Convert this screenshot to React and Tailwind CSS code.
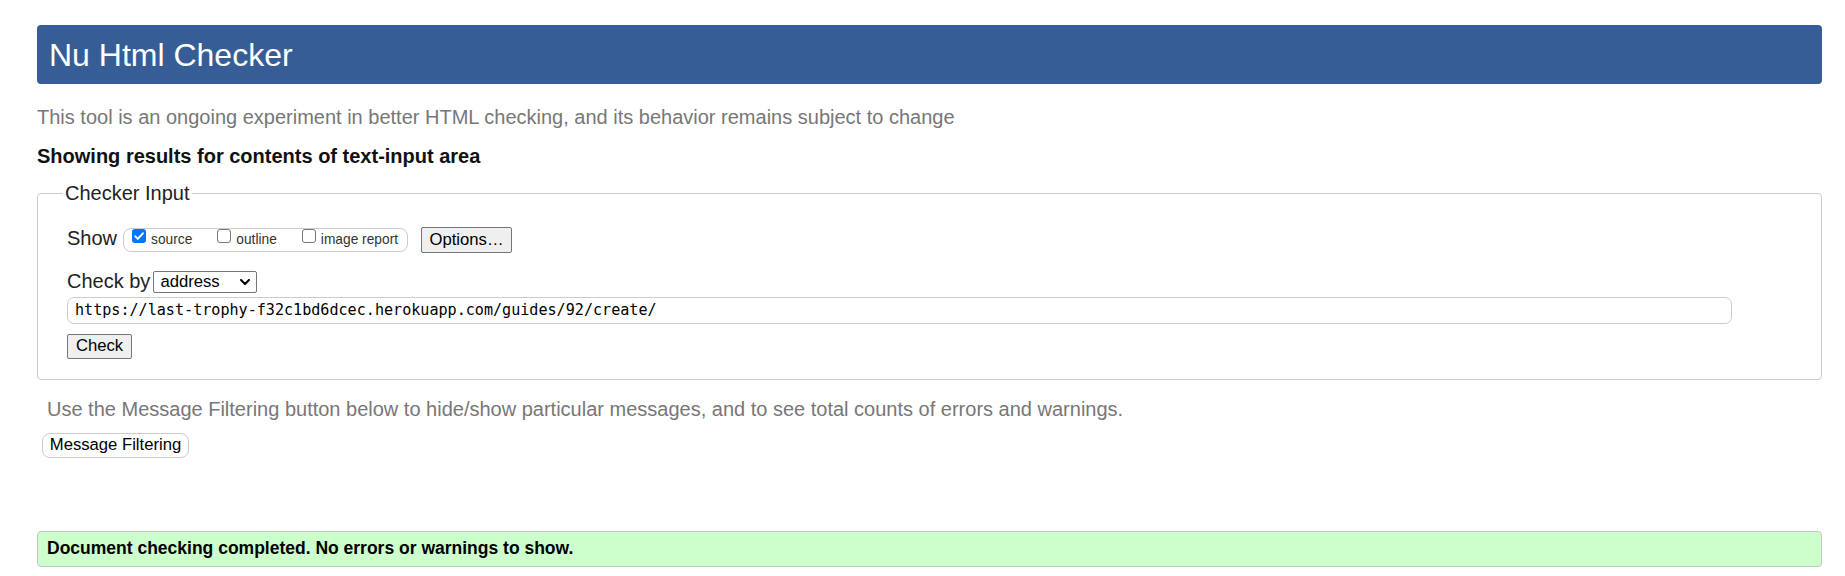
import React from "react";

function Checkbox({ checked }) {
  if (checked) {
    return (
      <span className="inline-flex h-[14px] w-[14px] shrink-0 items-center justify-center rounded-[3px] bg-[#0075ff]">
        <svg viewBox="0 0 14 14" className="h-[14px] w-[14px]">
          <path
            d="M3.2 7.3 5.8 9.9 10.9 4.3"
            fill="none"
            stroke="white"
            strokeWidth="2"
            strokeLinecap="round"
            strokeLinejoin="round"
          />
        </svg>
      </span>
    );
  }
  return (
    <span className="inline-block h-[14px] w-[14px] shrink-0 rounded-[3px] border border-[#767676] bg-white" />
  );
}

export default function App() {
  return (
    <div
      className="h-[576px] w-full overflow-hidden bg-white pl-[37px] pr-[23px] pt-[25px] text-[#222]"
      style={{ fontFamily: '"Liberation Sans", Arial, sans-serif' }}
    >
      <header className="flex h-[59px] items-center rounded-[4px] bg-[#365d96] pl-[12px]">
        <h1 className="text-[32px] leading-none font-normal text-white">Nu Html Checker</h1>
      </header>

      <p className="mt-[22px] text-[20px] leading-[23px] text-[#777]">
        This tool is an ongoing experiment in better HTML checking, and its behavior remains subject to change
      </p>

      <p className="mt-[16px] text-[20px] leading-[23px] font-bold text-[#111]">
        Showing results for contents of text-input area
      </p>

      <fieldset className="mt-[14px] rounded-[4px] border border-[#cccccc] pb-[20px] pl-[25px]">
        <legend className="px-[2px] text-[20px] leading-[23px] text-[#222]">Checker Input</legend>
        <div className="pl-[4px] pt-[22px]">
          <div className="flex h-[26px] items-start">
            <span className="text-[20px] leading-[23px]">Show</span>
            <div className="ml-[6px] mt-[1px] inline-flex h-[24px] items-start rounded-[8px] border border-[#cccccc] pl-[8px] pr-[9px] text-[13.75px] leading-none text-[#333]">
              <Checkbox checked />
              <span className="ml-[5px] mt-[3.5px]">source</span>
              <span className="ml-[25px]">
                <Checkbox />
              </span>
              <span className="ml-[5px] mt-[3.5px]">outline</span>
              <span className="ml-[25px]">
                <Checkbox />
              </span>
              <span className="ml-[5px] mt-[3.5px]">image report</span>
            </div>
            <button
              type="button"
              className="ml-[13px] flex h-[26px] w-[91px] items-center justify-center rounded-[2px] border border-[#767676] bg-[#efefef] text-[16.67px] leading-none text-black"
            >
              Options…
            </button>
          </div>

          <div className="mt-[17px] flex items-start">
            <span className="text-[20px] leading-[23px]">Check by</span>
            <div className="ml-[3px] mt-[1px] flex h-[22px] w-[104px] items-start justify-between rounded-[2px] border border-[#767676] bg-white pl-[6px] pr-[6px] text-[16.67px] leading-[20px] text-black">
              <span>address</span>
              <svg viewBox="0 0 10 6" className="mt-[7px] h-[6px] w-[10px]">
                <path d="M1 1 5 5 9 1" fill="none" stroke="black" strokeWidth="2" strokeLinecap="round" strokeLinejoin="round" />
              </svg>
            </div>
          </div>

          <input
            type="text"
            readOnly
            defaultValue="https://last-trophy-f32c1bd6dcec.herokuapp.com/guides/92/create/"
            className="mt-[3.5px] block h-[27px] w-[1665px] rounded-[7px] border border-[#cccccc] bg-white pl-[7px] text-[15.1px] text-black outline-none"
            style={{ fontFamily: '"DejaVu Sans Mono", "Liberation Mono", monospace' }}
          />

          <button
            type="button"
            className="mt-[10.5px] flex h-[25px] w-[65px] items-center justify-center rounded-[2px] border border-[#767676] bg-[#efefef] text-[16.67px] leading-none text-black"
          >
            Check
          </button>
        </div>
      </fieldset>

      <p className="ml-[10px] mt-[18px] text-[20px] leading-[23px] text-[#777]">
        Use the Message Filtering button below to hide/show particular messages, and to see total counts of errors and warnings.
      </p>

      <button
        type="button"
        className="ml-[5px] mt-[12px] flex h-[25px] w-[147px] items-center justify-center rounded-[8px] border border-[#cccccc] bg-white text-[16.67px] leading-none text-black"
      >
        Message Filtering
      </button>

      <div className="mt-[72.5px] flex h-[36px] items-center rounded-[4px] border border-[#c4c4c4] bg-[#ccffcc] pl-[9px]">
        <span className="text-[17.5px] leading-none font-bold text-black">
          Document checking completed. No errors or warnings to show.
        </span>
      </div>
    </div>
  );
}
